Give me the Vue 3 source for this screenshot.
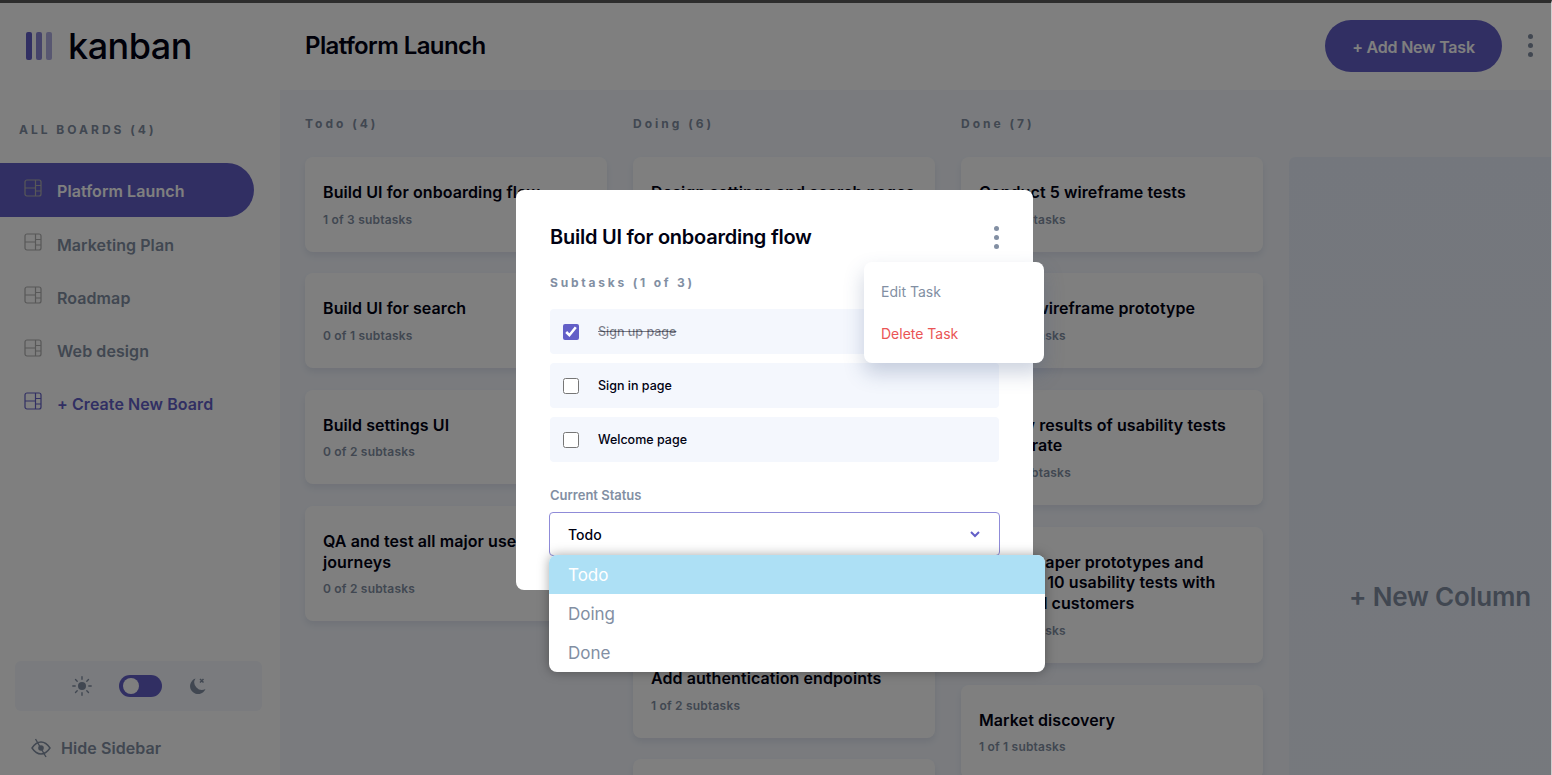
<script setup>
const boards = ['Platform Launch', 'Marketing Plan', 'Roadmap', 'Web design']

const columns = [
  {
    name: 'Todo (4)',
    cards: [
      { title: 'Build UI for onboarding flow', sub: '1 of 3 subtasks' },
      { title: 'Build UI for search', sub: '0 of 1 subtasks' },
      { title: 'Build settings UI', sub: '0 of 2 subtasks' },
      { title: 'QA and test all major user journeys', sub: '0 of 2 subtasks' }
    ]
  },
  {
    name: 'Doing (6)',
    cards: [
      { title: 'Design settings and search pages', sub: '1 of 3 subtasks' },
      { title: 'Add account endpoints', sub: '2 of 3 subtasks' },
      { title: 'Design onboarding flow', sub: '1 of 3 subtasks' },
      { title: 'Research pricing points of various competitors', sub: '1 of 3 subtasks' },
      { title: 'Add authentication endpoints', sub: '1 of 2 subtasks' },
      { title: 'Add search endpoints', sub: '1 of 2 subtasks' }
    ]
  },
  {
    name: 'Done (7)',
    cards: [
      { title: 'Conduct 5 wireframe tests', sub: '1 of 1 subtasks' },
      { title: 'Create wireframe prototype', sub: '1 of 1 subtasks' },
      { title: 'Review results of usability tests and iterate', sub: '3 of 3 subtasks' },
      { title: 'Create paper prototypes and conduct 10 usability tests with potential customers', sub: '1 of 1 subtasks' },
      { title: 'Market discovery', sub: '1 of 1 subtasks' }
    ]
  }
]

const subtasks = [
  { label: 'Sign up page', done: true },
  { label: 'Sign in page', done: false },
  { label: 'Welcome page', done: false }
]

const statuses = ['Todo', 'Doing', 'Done']
</script>

<template>
  <div class="app">
    <aside class="sidebar">
      <div class="logo">
        <span class="logo-bars"><i></i><i></i><i></i></span>
        <span class="logo-text">kanban</span>
      </div>
      <h2 class="boards-title">ALL BOARDS (4)</h2>
      <nav class="nav">
        <a
          v-for="(board, i) in boards"
          :key="board"
          class="nav-item"
          :class="{ active: i === 0 }"
        >
          <svg class="board-icon" width="18" height="18" viewBox="0 0 18 18" fill="none">
            <rect x="1" y="1" width="16" height="16" rx="2" />
            <path d="M11.500 1v16M1 9h10.500M11.500 6.500H17M11.500 12H17" />
          </svg>
          {{ board }}
        </a>
        <a class="nav-item create">
          <svg class="board-icon" width="18" height="18" viewBox="0 0 18 18" fill="none">
            <rect x="1" y="1" width="16" height="16" rx="2" />
            <path d="M11.500 1v16M1 9h10.500M11.500 6.500H17M11.500 12H17" />
          </svg>
          + Create New Board
        </a>
      </nav>

      <div class="sidebar-bottom">
        <div class="theme-box">
          <svg width="20" height="20" viewBox="0 0 20 20" fill="#828fa3">
            <circle cx="10" cy="10" r="4" />
            <path
              d="M10 .8v2.400M10 16.800v2.400M.8 10h2.400M16.800 10h2.400M3.500 3.500l1.700 1.700M14.800 14.800l1.700 1.700M3.500 16.500l1.700-1.700M14.800 5.200l1.700-1.700"
              stroke="#828fa3"
              stroke-width="1.400"
              stroke-linecap="round"
            />
          </svg>
          <span class="toggle"><span class="knob"></span></span>
          <svg width="20" height="20" viewBox="0 0 20 20" fill="#828fa3">
            <path d="M8.500 2.500A8 8 0 1 0 18.500 13 7.500 7.500 0 0 1 8.500 2.500Z" />
            <path d="M13 3l3.500 3.500M16.500 3 13 6.500" stroke="#828fa3" stroke-width="1.500" />
          </svg>
        </div>
        <a class="hide-sidebar">
          <svg width="20" height="20" viewBox="0 0 20 20" fill="none" stroke="#828fa3" stroke-width="1.400">
            <path d="M1 10C4 5.500 7 4 10 4s6 1.500 9 6c-3 4.500-6 6-9 6s-6-1.500-9-6Z" />
            <circle cx="10" cy="10" r="2.800" fill="#828fa3" stroke="none" />
            <path d="M4.500 1 15 19" />
          </svg>
          Hide Sidebar
        </a>
      </div>
    </aside>

    <div class="main">
      <header class="topbar">
        <h1 class="board-name">Platform Launch</h1>
        <div class="topbar-actions">
          <button class="add-task">+ Add New Task</button>
          <span class="dots"><i></i><i></i><i></i></span>
        </div>
      </header>

      <section class="board">
        <div v-for="col in columns" :key="col.name" class="column">
          <h3 class="column-title">{{ col.name }}</h3>
          <div class="cards">
            <article v-for="card in col.cards" :key="card.title" class="card">
              <h4>{{ card.title }}</h4>
              <p>{{ card.sub }}</p>
            </article>
          </div>
        </div>
        <div class="new-column">+ New Column</div>
      </section>
    </div>

    <div class="overlay">
      <div class="modal">
        <div class="modal-head">
          <h2>Build UI for onboarding flow</h2>
          <span class="dots light"><i></i><i></i><i></i></span>
        </div>

        <h3 class="modal-label">Subtasks (1 of 3)</h3>
        <div class="subtasks">
          <label
            v-for="task in subtasks"
            :key="task.label"
            class="subtask"
            :class="{ done: task.done }"
          >
            <input type="checkbox" :checked="task.done" />
            <span>{{ task.label }}</span>
          </label>
        </div>

        <div class="status-label">Current Status</div>
        <div class="select">
          <span>Todo</span>
          <svg width="10" height="7" viewBox="0 0 10 7" fill="none">
            <path d="M1 1l4 4 4-4" stroke="#635fc7" stroke-width="2" />
          </svg>
        </div>

        <div class="task-menu">
          <a>Edit Task</a>
          <a class="danger">Delete Task</a>
        </div>

        <ul class="options">
          <li v-for="(s, i) in statuses" :key="s" :class="{ current: i === 0 }">{{ s }}</li>
        </ul>
      </div>
    </div>
  </div>
</template>

<style>
html,
body {
  height: 100%;
  overflow: hidden;
}
</style>

<style scoped>
.app {
  position: relative;
  display: flex;
  height: 100vh;
  box-sizing: border-box;
  overflow: hidden;
  border-top: 3px solid #2d2d2d;
  border-right: 1px solid #cfcfcf;
  background: #fff;
  font-family: Inter, "Noto Sans", sans-serif;
  color: #000112;
}

/* sidebar */
.sidebar {
  width: 280px;
  flex-shrink: 0;
  display: flex;
  flex-direction: column;
  background: #fff;
}

.logo {
  display: flex;
  align-items: center;
  gap: 16px;
  padding: 29px 0 0 26px;
  height: 28px;
}

.logo-bars {
  display: flex;
  gap: 4px;
}

.logo-bars i {
  width: 6px;
  height: 28px;
  border-radius: 2px;
  background: #635fc7;
}

.logo-bars i:nth-child(2) {
  opacity: 0.75;
}

.logo-bars i:nth-child(3) {
  opacity: 0.5;
}

.logo-text {
  font-size: 36px;
  font-weight: 500;
  letter-spacing: -0.5px;
  line-height: 28px;
}

.boards-title {
  margin: 62px 0 0 19px;
  font-size: 12px;
  line-height: 16px;
  font-weight: 700;
  letter-spacing: 3px;
  color: #828fa3;
}

.nav {
  display: flex;
  flex-direction: column;
  margin-top: 25px;
}

.nav-item {
  display: flex;
  align-items: center;
  gap: 15px;
  height: 53.200px;
  width: 254px;
  box-sizing: border-box;
  padding: 2px 0 0 24px;
  font-size: 16px;
  font-weight: 600;
  letter-spacing: 0.08px;
  color: #828fa3;
}

.nav-item.active {
  height: 54px;
  border-radius: 0 27px 27px 0;
  background: #635fc7;
  color: #fff;
}

.nav-item.create {
  color: #635fc7;
}

.board-icon {
  margin-top: -6px;
  stroke: #b0b0b0;
  stroke-width: 1.200;
}

.nav-item.create .board-icon {
  stroke: #635fc7;
}

.sidebar-bottom {
  margin-top: auto;
  padding: 0 18px 17px 15px;
}

.theme-box {
  display: flex;
  align-items: center;
  height: 50px;
  padding-left: 57px;
  border-radius: 6px;
  background: #f4f7fd;
}

.toggle {
  display: block;
  width: 43px;
  height: 22px;
  box-sizing: border-box;
  margin: 0 25px 0 27px;
  padding: 3px 4px;
  border-radius: 11px;
  background: #635fc7;
}

.knob {
  display: block;
  width: 16px;
  height: 16px;
  border-radius: 50%;
  background: #fff;
}

.hide-sidebar {
  display: flex;
  align-items: center;
  gap: 10px;
  margin-top: 27px;
  padding-left: 16px;
  font-size: 16px;
  font-weight: 600;
  letter-spacing: 0.08px;
  color: #828fa3;
}

/* main area */
.main {
  flex: 1;
  min-width: 0;
  display: flex;
  flex-direction: column;
}

.topbar {
  height: 87px;
  flex-shrink: 0;
  display: flex;
  align-items: center;
  justify-content: space-between;
  padding: 0 18px 0 25px;
  background: #fff;
}

.board-name {
  margin: 0 0 3px;
  font-size: 24px;
  font-weight: 600;
  letter-spacing: -0.6px;
}

.topbar-actions {
  display: flex;
  align-items: center;
  gap: 26px;
  margin-bottom: 2px;
}

.add-task {
  width: 177px;
  height: 52px;
  padding: 2px 0 0;
  border: 0;
  border-radius: 26px;
  background: #635fc7;
  color: #fff;
  font-family: inherit;
  font-size: 16px;
  font-weight: 600;
  letter-spacing: -0.2px;
}

.dots {
  display: flex;
  flex-direction: column;
  gap: 4px;
}

.dots i {
  width: 5px;
  height: 5px;
  border-radius: 50%;
  background: #828fa3;
}

.board {
  flex: 1;
  min-height: 0;
  display: flex;
  gap: 26px;
  padding: 26px 0 0 25px;
  overflow: hidden;
  background: #f4f7fd;
}

.column {
  width: 302px;
  flex-shrink: 0;
}

.column-title {
  margin: 0 0 26px;
  font-size: 12px;
  line-height: 15px;
  font-weight: 700;
  letter-spacing: 3px;
  color: #828fa3;
}

.cards {
  display: flex;
  flex-direction: column;
  gap: 21.500px;
}

.card {
  padding: 25px 18px 24px;
  border-radius: 8px;
  background: #fff;
  box-shadow: 0 4px 6px rgba(54, 78, 126, 0.1);
}

.card h4 {
  margin: 0;
  font-size: 16px;
  line-height: 20.800px;
  font-weight: 600;
  letter-spacing: 0.08px;
}

.card p {
  margin: 9px 0 0;
  font-size: 12px;
  line-height: 16px;
  font-weight: 600;
  letter-spacing: 0.2px;
  color: #828fa3;
}

.new-column {
  width: 302px;
  height: 878px;
  flex-shrink: 0;
  display: flex;
  align-items: center;
  justify-content: center;
  margin-top: 41px;
  border-radius: 6px;
  background: linear-gradient(180deg, #e9effa 0%, rgba(233, 239, 250, 0.5) 100%);
  font-size: 26px;
  font-weight: 600;
  letter-spacing: -0.2px;
  color: #828fa3;
}

/* modal */
.overlay {
  position: absolute;
  inset: 0;
  display: flex;
  align-items: center;
  justify-content: center;
  background: rgba(0, 0, 0, 0.5);
}

.modal {
  position: relative;
  width: 517px;
  height: 400px;
  box-sizing: border-box;
  margin: 2px 2px 0 0;
  padding: 34px;
  border-radius: 8px;
  background: #fff;
}

.modal-head {
  display: flex;
  align-items: center;
  justify-content: space-between;
  height: 26px;
}

.modal-head h2 {
  margin: 0;
  font-size: 20px;
  font-weight: 600;
  letter-spacing: -0.25px;
}

.modal-label {
  margin: 25px 0 0;
  font-size: 12px;
  line-height: 16px;
  font-weight: 700;
  letter-spacing: 2.800px;
  color: #828fa3;
}

.subtasks {
  display: flex;
  flex-direction: column;
  gap: 9px;
  margin-top: 18px;
}

.subtask {
  display: flex;
  align-items: center;
  gap: 19px;
  height: 45px;
  padding-left: 13px;
  border-radius: 4px;
  background: #f4f7fd;
  font-size: 12.500px;
  font-weight: 500;
}

.subtask input {
  width: 16px;
  height: 16px;
  margin: 0;
  accent-color: #635fc7;
}

.subtask.done span {
  color: rgba(0, 1, 18, 0.5);
  text-decoration: line-through;
}

.status-label {
  margin-top: 25px;
  font-size: 13px;
  line-height: 16px;
  font-weight: 600;
  color: #828fa3;
}

.select {
  display: flex;
  align-items: center;
  justify-content: space-between;
  width: 451px;
  height: 44px;
  box-sizing: border-box;
  margin: 9px 0 0 -1px;
  padding: 0 19px 0 18px;
  border: 1px solid #8f8bd8;
  border-radius: 4px;
  font-size: 14px;
  font-weight: 500;
}

.task-menu {
  position: absolute;
  top: 72px;
  left: 348px;
  width: 180px;
  height: 101px;
  box-sizing: border-box;
  display: flex;
  flex-direction: column;
  justify-content: center;
  gap: 24px;
  padding: 1px 0 0 17px;
  border-radius: 8px;
  background: #fff;
  box-shadow: 0 10px 20px rgba(54, 78, 126, 0.25);
  font-size: 14px;
  line-height: 18px;
  color: #828fa3;
}

.task-menu .danger {
  color: #ea5555;
}

.options {
  position: absolute;
  top: 365px;
  left: 33px;
  width: 496px;
  margin: 0;
  padding: 0;
  overflow: hidden;
  list-style: none;
  border-radius: 8px;
  background: #fff;
  box-shadow: 0 0 12px rgba(0, 0, 0, 0.35);
}

.options li {
  height: 39px;
  padding-left: 19px;
  font-size: 17px;
  line-height: 41px;
  color: #828fa3;
}

.options li.current {
  background: #ade0f5;
  color: #fff;
}
</style>
